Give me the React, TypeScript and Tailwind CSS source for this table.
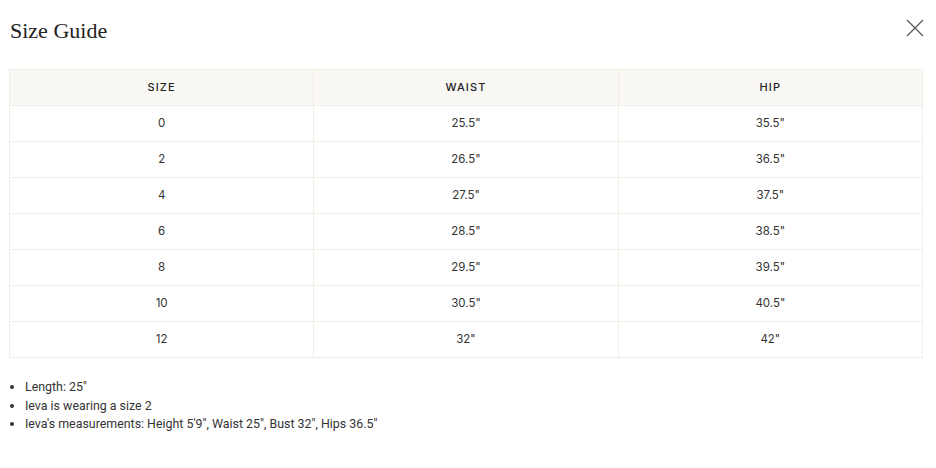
import React from "react";

const rows = [
  ["0", '25.5"', '35.5"'],
  ["2", '26.5"', '36.5"'],
  ["4", '27.5"', '37.5"'],
  ["6", '28.5"', '38.5"'],
  ["8", '29.5"', '39.5"'],
  ["10", '30.5"', '40.5"'],
  ["12", '32"', '42"'],
];

export default function App() {
  return (
    <div className="w-[936px] h-[468px] bg-white text-[#222] font-['Inter',sans-serif]">
      <div className="flex items-start justify-between pl-[10px] pr-[12px] pt-[17px] h-[69px]">
        <h1 className="font-['Liberation_Serif',serif] text-[22px] leading-[28px] text-[#222]">Size Guide</h1>
        <svg width="18" height="18" viewBox="0 0 18 18" className="mt-[2px]">
          <path d="M1 1 L17 17 M17 1 L1 17" stroke="#555" strokeWidth="1.2" />
        </svg>
      </div>
      <div className="px-[9px]">
        <table className="w-[914px] border-collapse table-fixed text-[11.5px]">
          <thead>
            <tr className="bg-[#faf8f4] h-[36px]">
              {["SIZE", "WAIST", "HIP"].map((h) => (
                <th key={h} className="border border-[#f1eee6] font-medium tracking-[0.1em] text-[11px] text-[#222] p-0">
                  {h}
                </th>
              ))}
            </tr>
          </thead>
          <tbody>
            {rows.map((r) => (
              <tr key={r[0]} className="h-[36px]">
                {r.map((c, i) => (
                  <td key={i} className="border border-[#f1eee6] text-center p-0 text-[#333]">
                    {c}
                  </td>
                ))}
              </tr>
            ))}
          </tbody>
        </table>
      </div>
      <ul className="list-disc pl-[25px] mt-[20px] text-[12.4px] leading-[18.5px] text-[#333] font-['Roboto',sans-serif]">
        <li>Length: 25"</li>
        <li>Ieva is wearing a size 2</li>
        <li>Ieva's measurements: Height 5'9", Waist 25", Bust 32", Hips 36.5"</li>
      </ul>
    </div>
  );
}
